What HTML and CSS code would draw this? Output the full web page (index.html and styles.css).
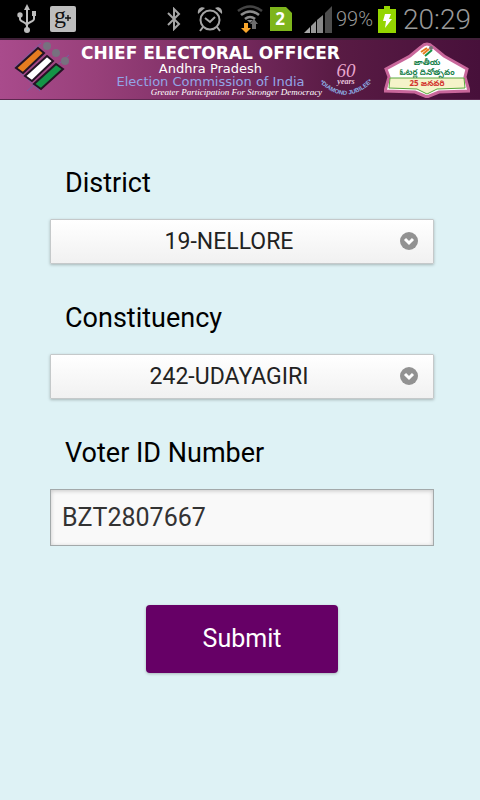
FILE: index.html
```html
<!DOCTYPE html>
<html lang="en">
<head>
  <meta charset="UTF-8">
  <meta name="viewport" content="width=device-width, initial-scale=1.0">
  <title>Chief Electoral Officer</title>
  <link rel="stylesheet" href="styles.css">
</head>
<body>
  <div class="status-bar">
    <div class="status-left">
      <svg width="20" height="30" viewBox="0 0 20 30" fill="none" stroke="#bdbdbd" stroke-width="2">
        <path d="M10 5v20M3 12v3c0 3 7 3 7 7M17 11v4c0 3-7 3-7 6"/>
        <path d="M10 0l3 6H7z" fill="#bdbdbd" stroke="none"/>
        <circle cx="3" cy="11" r="2.7" fill="#bdbdbd" stroke="none"/>
        <path d="M15 7h4v5h-4z" fill="#bdbdbd" stroke="none"/>
        <circle cx="10" cy="26" r="3" fill="#bdbdbd" stroke="none"/>
      </svg>
      <svg class="gplus-icon" width="26" height="26" viewBox="0 0 26 26">
        <rect width="26" height="26" rx="2" fill="#bdbdbd"/>
        <text class="gplus" x="4" y="17">g</text>
        <path d="M18 9v6M15 12h6" stroke="#111" stroke-width="1.4"/>
      </svg>
    </div>
    <div class="status-right">
      <svg class="bluetooth" width="14" height="24" viewBox="0 0 14 24" fill="none" stroke="#a5a5a5" stroke-width="2">
        <path d="M1 6l11 11-5 5V2l5 5L1 18"/>
      </svg>
      <svg class="alarm" width="26" height="26" viewBox="0 0 26 26" fill="none" stroke="#a5a5a5" stroke-width="2">
        <circle cx="13" cy="14" r="9.5"/>
        <path d="M8 12l5 4 5-5M6 21l-3 4M20 21l3 4"/>
        <path d="M1 8C0 3 4 0 8 2zM25 8c1-5-3-8-7-6z" fill="#a5a5a5" stroke="none"/>
      </svg>
      <svg class="wifi" width="26" height="28" viewBox="0 0 26 28" fill="none" stroke="#8b8b8b" stroke-width="2.6">
        <path d="M1 6Q13-3 25 6" stroke="#444"/>
        <path d="M4 10q9-7 18 0M8 14q5-4 10 0"/>
        <path d="M10 15h6l-3 3z" fill="#8b8b8b" stroke="none"/>
        <path d="M7 18h4v5h3l-5 5-5-5h3z" fill="#f9a62c" stroke="none"/>
        <path d="M15 24v-5h-2l4-5 4 5h-2v5z" fill="#6d6d6d" stroke="none"/>
      </svg>
      <svg class="sim" width="22" height="24" viewBox="0 0 22 24">
        <path d="M0 0h16l6 6v18H0z" fill="#7eb51c"/>
        <text class="sim-number" x="10" y="18" text-anchor="middle">2</text>
      </svg>
      <svg width="28" height="27" viewBox="0 0 28 27">
        <path d="M0 27l6-6v6z" fill="#aaa"/>
        <path d="M7 27v-7l5-5v12z" fill="#999"/>
        <path d="M13 27V14l6-5v18z" fill="#888"/>
        <path d="M21 27V7l7-7v27z" fill="#4d4d4d"/>
      </svg>
      <span class="battery-level">99%</span>
      <svg class="battery" width="18" height="27" viewBox="0 0 18 27">
        <path d="M6 0h6v3h6v24H0V3h6z" fill="#94d500"/>
        <path d="M7 8h6l-2 5h3L7 22l1-7H5z" fill="#fff"/>
      </svg>
      <span class="clock">20:29</span>
    </div>
  </div>

  <header class="banner">
    <svg class="eci-logo" width="56" height="50" viewBox="0 0 56 50">
      <path d="M1 25L27 1M1 25l25 24M13 49L55 13" stroke="#7660a5" stroke-width="1"/>
      <g fill="#77717f">
        <circle cx="33" cy="4" r="4"/>
        <circle cx="42" cy="11" r="4"/>
        <circle cx="51" cy="19" r="4"/>
      </g>
      <g stroke="#241324" stroke-width="2">
        <path d="M24 6l6 5L9 31l-7-5z" fill="#e57c20"/>
        <path d="M33 14l6 5-21 20-7-5z" fill="#fff"/>
        <path d="M42 22l7 5-22 20-7-5z" fill="#159447"/>
      </g>
    </svg>
    <div class="banner-text">
      <h1>CHIEF ELECTORAL OFFICER</h1>
      <p class="state">Andhra Pradesh</p>
      <p class="commission">Election Commission of India</p>
      <p class="motto">Greater Participation For Stronger Democracy</p>
    </div>
    <svg class="jubilee" width="58" height="40" viewBox="0 0 58 40">
      <defs>
        <path id="jubilee-arc" d="M0 22Q29 52 58 21"/>
      </defs>
      <text class="sixty" x="29" y="19" text-anchor="middle">60</text>
      <text class="years" x="29" y="26" text-anchor="middle">years</text>
      <text class="diamond"><textPath href="#jubilee-arc" startOffset="50%" text-anchor="middle">*DIAMOND JUBILEE*</textPath></text>
    </svg>
    <svg class="voters-day" width="86" height="56" viewBox="0 0 86 56">
      <path d="M43 2q3 0 6 3l11 9 23 13-2 8 4 14-30 1-12 5-12-5-30-1 4-14-3-8 24-13L37 5q3-3 6-3z" fill="#fff" stroke="#c9679b" stroke-width="3"/>
      <path d="M6 36h74l1 10-28 1-10 5-10-5-28-1z" fill="#f5f3c9" stroke="#58a83c" stroke-width="1"/>
      <path d="M37 10l6-4M39 12l6-5" stroke="#e57c20" stroke-width="2"/>
      <path d="M41 14l7-6" stroke="#159447" stroke-width="2"/>
      <circle cx="47" cy="6" r="2" fill="#777"/>
      <text class="telugu green" x="43" y="23" text-anchor="middle">జాతీయ</text>
      <text class="telugu green" x="43" y="33" text-anchor="middle">ఓటర్ల దినోత్సవం</text>
      <text class="telugu red" x="43" y="44" text-anchor="middle">25 జనవరి</text>
    </svg>
  </header>

  <form class="voter-form" action="" method="post">
    <label for="district">District</label>
    <div class="select-box">
      <select id="district" name="district">
        <option>19-NELLORE</option>
      </select>
      <svg class="arrow" width="18" height="18" viewBox="0 0 18 18">
        <circle cx="9" cy="9" r="9" fill="#929292"/>
        <path d="M5 7l4 4 4-4" fill="none" stroke="#fff" stroke-width="3"/>
      </svg>
    </div>

    <label for="constituency">Constituency</label>
    <div class="select-box">
      <select id="constituency" name="constituency">
        <option>242-UDAYAGIRI</option>
      </select>
      <svg class="arrow" width="18" height="18" viewBox="0 0 18 18">
        <circle cx="9" cy="9" r="9" fill="#929292"/>
        <path d="M5 7l4 4 4-4" fill="none" stroke="#fff" stroke-width="3"/>
      </svg>
    </div>

    <label for="voter-id">Voter ID Number</label>
    <input type="text" id="voter-id" name="voter-id" value="BZT2807667">

    <button type="submit">Submit</button>
  </form>
</body>
</html>
```
FILE: styles.css
```css
* {
  box-sizing: border-box;
}
body {
  margin: 0;
  min-height: 100vh;
  background-color: #def2f5;
  font-family: Roboto, "Noto Sans", sans-serif;
}
svg {
  flex-shrink: 0;
}
.status-bar {
  display: flex;
  justify-content: space-between;
  align-items: center;
  height: 38px;
  padding: 0 9px 0 17px;
  background-color: #000;
  color: #999;
}
.status-left,
.status-right {
  display: flex;
  align-items: center;
}
.status-left {
  gap: 13px;
}
.gplus-icon {
  overflow: visible;
}
.gplus {
  font: 24px "Liberation Serif", serif;
  fill: #111;
}
.alarm {
  margin-left: 16px;
}
.wifi {
  margin: 0 7px 0 14px;
}
.sim {
  margin-right: 12px;
}
.sim-number {
  font: bold 17px "Open Sans", sans-serif;
  fill: #fff;
}
.battery-level {
  margin: 0 5px 0 4px;
  font-size: 20px;
  font-weight: 300;
}
.clock {
  margin-left: 7px;
  font-size: 28px;
  font-weight: 300;
}
.banner {
  display: flex;
  align-items: center;
  height: 62px;
  padding: 0 10px 0 14px;
  border-top: 2px solid #402038;
  border-bottom: 1px solid #5d2850;
  background: linear-gradient(to right, #a94b8c 0%, #98407a 20%, #74295d 50%, #591b44 70%, #47103a 100%);
}
.eci-logo {
  margin-bottom: 6px;
}
.banner-text {
  margin-left: 11px;
  padding-top: 2px;
  color: #fff;
  font-family: "DejaVu Sans", sans-serif;
  text-align: center;
  white-space: nowrap;
}
.banner-text h1 {
  margin: 0;
  font-size: 17px;
  line-height: 18px;
}
.banner-text p {
  margin: 0;
}
.banner-text .state {
  font-size: 13px;
  line-height: 13px;
}
.banner-text .commission {
  color: #93a5e6;
  font-size: 13px;
  line-height: 13px;
}
.banner-text .motto {
  padding-left: 52px;
  font: italic 9px/9px "Liberation Serif", serif;
}
/* the title runs on above the jubilee mark */
.jubilee {
  margin: 16px 0 0 -23px;
  overflow: visible;
}
.sixty {
  font: italic 19px "Liberation Serif", serif;
  fill: #e9a6cd;
}
.years {
  font: italic bold 8px "Liberation Serif", serif;
  fill: #e9c6dd;
}
.diamond {
  font: bold 6px "Liberation Sans", sans-serif;
  fill: #8fb4ea;
}
.voters-day {
  margin-left: auto;
}
.telugu {
  font: bold 8px "Noto Sans Telugu", "Noto Sans", sans-serif;
}
.green {
  fill: #178049;
}
.red {
  fill: #d2322d;
}
.voter-form {
  display: flex;
  flex-direction: column;
  padding: 65px 46px 40px 50px;
}
.voter-form label {
  margin: 0 15px 18px;
  color: #000;
  font-size: 27px;
  line-height: 36px;
}
.select-box {
  display: grid;
  align-items: center;
  margin-bottom: 36px;
}
.select-box select,
.select-box .arrow {
  grid-area: 1 / 1;
}
.select-box select {
  width: 100%;
  height: 45px;
  padding: 0 40px 0 14px;
  border: 1px solid #c5c9ca;
  border-radius: 1px;
  background: linear-gradient(#fff, #f1f1f1);
  box-shadow: 0 1px 3px rgba(0, 0, 0, 0.25);
  color: #222;
  font-family: inherit;
  font-size: 23px;
  text-align: center;
  text-align-last: center;
  appearance: none;
}
.select-box .arrow {
  justify-self: end;
  margin: 0 16px 2px 0;
  pointer-events: none;
}
.voter-form input {
  width: 100%;
  height: 57px;
  padding: 0 11px;
  border: 1px solid #a3a9aa;
  border-radius: 0;
  background-color: #f9f9f9;
  box-shadow: inset 0 1px 4px rgba(0, 0, 0, 0.2);
  color: #333;
  font-family: inherit;
  font-size: 25px;
}
.voter-form button {
  align-self: center;
  width: 50%;
  height: 68px;
  margin-top: 59px;
  padding-bottom: 3px;
  border: none;
  border-radius: 4px;
  background-color: #660066;
  box-shadow: 0 1px 3px rgba(0, 0, 0, 0.25);
  color: #fff;
  font-family: inherit;
  font-size: 25px;
  cursor: pointer;
}
```
